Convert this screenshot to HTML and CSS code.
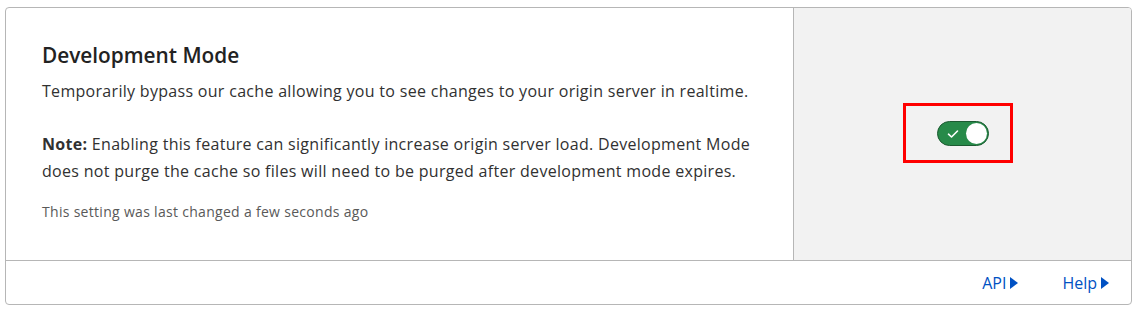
FILE: index.html
```html
<!DOCTYPE html>
<html lang="en">
<head>
<meta charset="utf-8">
<title>Development Mode</title>
<link rel="stylesheet" href="styles.css">
</head>
<body>
<div class="card">
  <div class="card-main">
    <div class="card-content">
      <h3 class="title">Development Mode</h3>
      <p class="desc">Temporarily bypass our cache allowing you to see changes to your origin server in realtime.</p>
      <p class="desc note"><strong>Note:</strong> Enabling this feature can significantly increase origin server load. Development Mode does not purge the cache so files will need to be purged after development mode expires.</p>
      <p class="meta">This setting was last changed a few seconds ago</p>
    </div>
    <div class="card-control">
      <div class="highlight">
        <button class="toggle" aria-pressed="true" aria-label="Development Mode">
          <svg class="check" width="12" height="10" viewBox="0 0 12 10"><path d="M1.5 5.2 L4.5 8 L10.5 2" fill="none" stroke="#fff" stroke-width="1.6" stroke-linecap="round" stroke-linejoin="round"/></svg>
          <span class="knob"></span>
        </button>
      </div>
    </div>
  </div>
  <div class="card-footer">
    <a class="link" href="#">API<span class="arrow"></span></a>
    <a class="link" href="#">Help<span class="arrow"></span></a>
  </div>
</div>
</body>
</html>
```
FILE: styles.css
```css
html, body {
  margin: 0;
  background: #fff;
}
body {
  padding: 7px 5px;
  font-family: "Open Sans", "Noto Sans", sans-serif;
  color: #313131;
}
.card {
  border: 1px solid #b6b6b6;
  border-radius: 4px;
  overflow: hidden;
}
.card-main {
  display: grid;
  grid-template-columns: 787px 1fr;
  height: 252px;
  border-bottom: 1px solid #b6b6b6;
}
.card-content {
  padding: 33px 21px 0 36px;
}
.title {
  margin: 0 0 9px;
  font-size: 20.8px;
  font-weight: 600;
  line-height: 28px;
  color: #222;
}
.desc {
  margin: 0;
  font-size: 16px;
  letter-spacing: 0.3px;
  line-height: 27px;
}
.note {
  margin-top: 26px;
}
.note strong {
  font-weight: 700;
}
.meta {
  margin: 17px 0 0;
  font-size: 14px;
  letter-spacing: 0.3px;
  line-height: 20px;
  color: #595959;
}
.card-control {
  background: #f2f2f2;
  border-left: 1px solid #b6b6b6;
  display: flex;
  justify-content: center;
  align-items: flex-start;
  padding-top: 95px;
  padding-right: 9px;
}
.highlight {
  border: 3px solid #ff0000;
  width: 110px;
  height: 60px;
  display: flex;
  align-items: center;
  justify-content: center;
  box-sizing: border-box;
}
.toggle {
  position: relative;
  width: 52px;
  height: 25px;
  padding: 0;
  border: 1px solid #1c5a31;
  border-radius: 13px;
  background: #278a49;
  cursor: pointer;
  display: block;
  margin-left: 10px;
}
.check {
  position: absolute;
  left: 9px;
  top: 7px;
}
.knob {
  position: absolute;
  right: 1px;
  top: 1px;
  width: 21px;
  height: 21px;
  border-radius: 50%;
  background: #fff;
}
.card-footer {
  height: 43px;
  display: flex;
  justify-content: flex-end;
  align-items: center;
  gap: 44px;
  padding-right: 22px;
}
.link {
  color: #0051c3;
  text-decoration: none;
  font-size: 16px;
  display: inline-flex;
  align-items: center;
  gap: 4px;
}
.arrow {
  display: inline-block;
  width: 0;
  height: 0;
  border-top: 6px solid transparent;
  border-bottom: 6px solid transparent;
  border-left: 8px solid #0051c3;
}
```
